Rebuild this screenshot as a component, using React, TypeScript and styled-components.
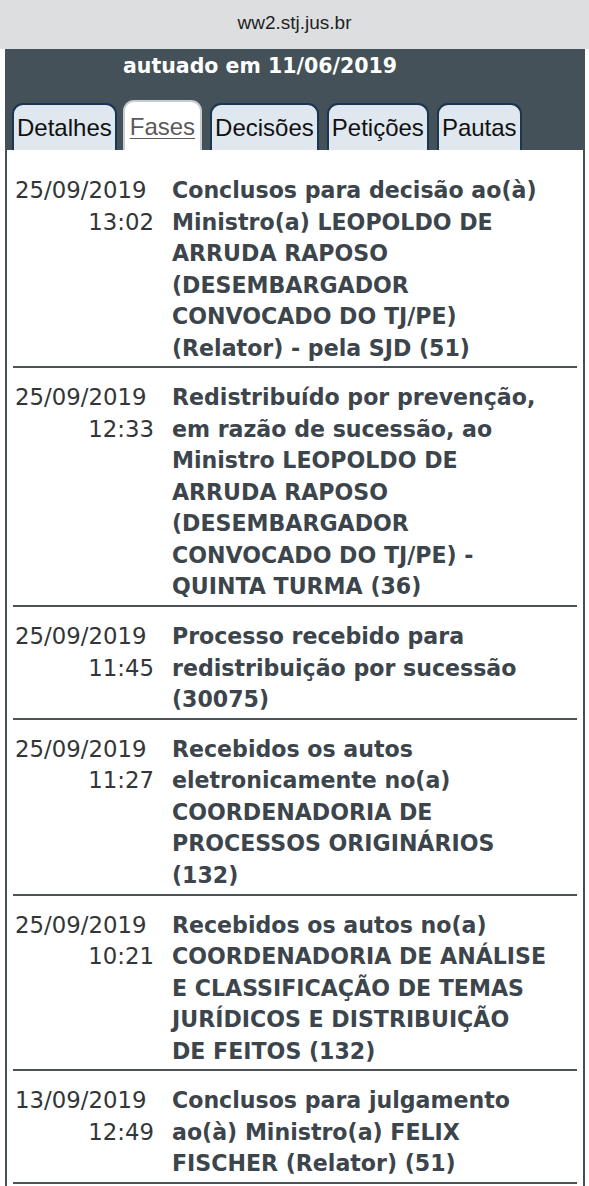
import React from 'react'
import styled, { createGlobalStyle } from 'styled-components'

interface Fase {
  date: string
  time: string
  text: string
}

const fases: Fase[] = [
  {
    date: '25/09/2019',
    time: '13:02',
    text: 'Conclusos para decisão ao(à) Ministro(a) LEOPOLDO DE ARRUDA RAPOSO (DESEMBARGADOR CONVOCADO DO TJ/PE) (Relator) - pela SJD (51)',
  },
  {
    date: '25/09/2019',
    time: '12:33',
    text: 'Redistribuído por prevenção, em razão de sucessão, ao Ministro LEOPOLDO DE ARRUDA RAPOSO (DESEMBARGADOR CONVOCADO DO TJ/PE) - QUINTA TURMA (36)',
  },
  {
    date: '25/09/2019',
    time: '11:45',
    text: 'Processo recebido para redistribuição por sucessão (30075)',
  },
  {
    date: '25/09/2019',
    time: '11:27',
    text: 'Recebidos os autos eletronicamente no(a) COORDENADORIA DE PROCESSOS ORIGINÁRIOS (132)',
  },
  {
    date: '25/09/2019',
    time: '10:21',
    text: 'Recebidos os autos no(a) COORDENADORIA DE ANÁLISE E CLASSIFICAÇÃO DE TEMAS JURÍDICOS E DISTRIBUIÇÃO DE\u00a0FEITOS (132)',
  },
  {
    date: '13/09/2019',
    time: '12:49',
    text: 'Conclusos para julgamento ao(à) Ministro(a) FELIX FISCHER (Relator) (51)',
  },
]

const tabs = ['Detalhes', 'Fases', 'Decisões', 'Petições', 'Pautas']

const GlobalStyle = createGlobalStyle`
  html, body {
    margin: 0;
    padding: 0;
    background: #ffffff;
  }
  body {
    font-family: "DejaVu Sans", Verdana, sans-serif;
  }
`

const App: React.FC = () => {
  return (
    <>
      <GlobalStyle />
      <UrlBar>ww2.stj.jus.br</UrlBar>
      <Panel>
        <Title>autuado em 11/06/2019</Title>
        <TabRow>
          {tabs.map((t) => (
            <Tab key={t} active={t === 'Fases'}>
              {t}
            </Tab>
          ))}
        </TabRow>
        <Content>
          {fases.map((f, i) => (
            <FaseRow key={i}>
              <When>
                <DateText>{f.date}</DateText>
                <TimeText>{f.time}</TimeText>
              </When>
              <Description>{f.text}</Description>
            </FaseRow>
          ))}
        </Content>
      </Panel>
    </>
  )
}

export default App

const UrlBar = styled.div`
  height: 49px;
  background: #dcdedf;
  display: flex;
  align-items: center;
  justify-content: center;
  padding-bottom: 4px;
  box-sizing: border-box;
  font-family: "Liberation Sans", Arial, sans-serif;
  font-size: 19px;
  color: #1f1f1f;
`

const Panel = styled.div`
  margin: 0 4px 0 5px;
  background: #455158;
`

const Title = styled.div`
  height: 34px;
  display: flex;
  align-items: center;
  padding-left: 118px;
  font-size: 20.5px;
  font-weight: bold;
  color: #ffffff;
`

const TabRow = styled.div`
  display: flex;
  align-items: flex-end;
  gap: 8px;
  padding: 0 7px;
  height: 67px;
  box-sizing: border-box;
`

const Tab = styled.div<{ active?: boolean }>`
  height: ${(p) => (p.active ? '50px' : '47px')};
  box-sizing: border-box;
  padding: ${(p) => (p.active ? '10px 5px 0' : '8px 3px 0')};
  margin-left: ${(p) => (p.active ? '-2px' : '0')};
  border: 2px solid ${(p) => (p.active ? '#c9cdd0' : '#1b3552')};
  border-bottom: none;
  border-radius: 11px 11px 0 0;
  background: ${(p) => (p.active ? '#ffffff' : '#dfe7ef')};
  font-family: "Liberation Sans", Arial, sans-serif;
  font-size: 24px;
  line-height: 30px;
  color: ${(p) => (p.active ? '#5a5a5a' : '#111111')};
  text-decoration: ${(p) => (p.active ? 'underline' : 'none')};
  text-underline-offset: 3px;
  text-decoration-thickness: 1px;
`

const Content = styled.div`
  background: #ffffff;
  border-left: 2px solid #455158;
  border-right: 2px solid #455158;
  padding: 11px 6px 0;
  min-height: 1040px;
`

const FaseRow = styled.div`
  display: grid;
  grid-template-columns: 139px 392px;
  column-gap: 18px;
  padding: 14px 0 2.3px 2px;
  border-bottom: 2px solid #4c5358;
`

const When = styled.div`
  display: flex;
  flex-direction: column;
  font-size: 22.8px;
  line-height: 31.5px;
  color: #333639;
`

const DateText = styled.span`
  text-align: left;
`

const TimeText = styled.span`
  text-align: right;
`

const Description = styled.div`
  font-size: 22.1px;
  line-height: 31.5px;
  font-weight: bold;
  color: #3c454c;
`
